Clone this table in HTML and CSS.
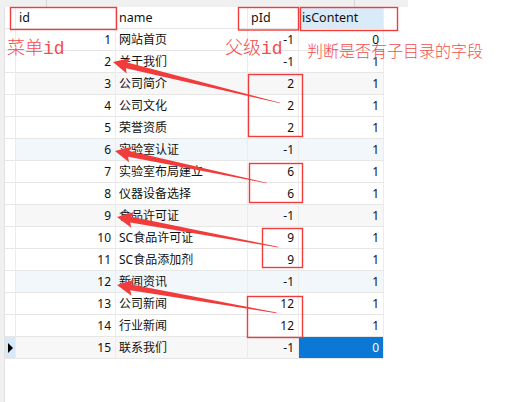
FILE: index.html
```html
<!DOCTYPE html>
<html lang="zh">
<head>
<meta charset="utf-8">
<link rel="stylesheet" href="styles.css">
</head>
<body>
<div class="page">
  <div class="topbar"><span class="tb-cell w47"></span><span class="tb-cell w308"></span><span class="tb-cell w53"></span></div>
  <div class="main">
    <div class="gutter"></div>
    <div class="grid">
      <div class="row head">
        <div class="c rh"></div>
        <div class="c">id</div>
        <div class="c">name</div>
        <div class="c">pId</div>
        <div class="c sel">isContent</div>
      </div>
      <div class="row"><div class="c rh"></div><div class="c n">1</div><div class="c">网站首页</div><div class="c n">-1</div><div class="c n">0</div></div>
      <div class="row"><div class="c rh"></div><div class="c n">2</div><div class="c">关于我们</div><div class="c n">-1</div><div class="c n">1</div></div>
      <div class="row grey"><div class="c rh"></div><div class="c n">3</div><div class="c">公司简介</div><div class="c n">2</div><div class="c n">1</div></div>
      <div class="row"><div class="c rh"></div><div class="c n">4</div><div class="c">公司文化</div><div class="c n">2</div><div class="c n">1</div></div>
      <div class="row"><div class="c rh"></div><div class="c n">5</div><div class="c">荣誉资质</div><div class="c n">2</div><div class="c n">1</div></div>
      <div class="row blue"><div class="c rh"></div><div class="c n">6</div><div class="c">实验室认证</div><div class="c n">-1</div><div class="c n">1</div></div>
      <div class="row"><div class="c rh"></div><div class="c n">7</div><div class="c">实验室布局建立</div><div class="c n">6</div><div class="c n">1</div></div>
      <div class="row"><div class="c rh"></div><div class="c n">8</div><div class="c">仪器设备选择</div><div class="c n">6</div><div class="c n">1</div></div>
      <div class="row grey"><div class="c rh"></div><div class="c n">9</div><div class="c">食品许可证</div><div class="c n">-1</div><div class="c n">1</div></div>
      <div class="row"><div class="c rh"></div><div class="c n">10</div><div class="c">SC食品许可证</div><div class="c n">9</div><div class="c n">1</div></div>
      <div class="row"><div class="c rh"></div><div class="c n">11</div><div class="c">SC食品添加剂</div><div class="c n">9</div><div class="c n">1</div></div>
      <div class="row blue"><div class="c rh"></div><div class="c n">12</div><div class="c">新闻资讯</div><div class="c n">-1</div><div class="c n">1</div></div>
      <div class="row"><div class="c rh"></div><div class="c n">13</div><div class="c">公司新闻</div><div class="c n">12</div><div class="c n">1</div></div>
      <div class="row"><div class="c rh"></div><div class="c n">14</div><div class="c">行业新闻</div><div class="c n">12</div><div class="c n">1</div></div>
      <div class="row grey"><div class="c rh cur"><span class="tri"></span></div><div class="c n">15</div><div class="c">联系我们</div><div class="c n">-1</div><div class="c n focus">0</div></div>
    </div>
  </div>

  <div class="overlay">
    <svg class="marks" width="505" height="402" viewBox="0 0 505 402">
      <g fill="none" stroke="#f23c3c" stroke-width="1.4">
        <rect x="10.5" y="7.5" width="106" height="22"/>
        <rect x="238.5" y="7.5" width="60" height="22.5"/>
        <rect x="300.5" y="7.5" width="97" height="23"/>
        <rect x="248.5" y="74.5" width="54" height="62"/>
        <rect x="249.5" y="163.5" width="53" height="39"/>
        <rect x="262.5" y="228.5" width="40" height="39"/>
        <rect x="247.5" y="296.5" width="55" height="41"/>
      </g>
      <g fill="#f23c3c">
        <polygon transform="translate(113 62) rotate(13.8)" points="0,0 16,-8 14,-3 172,-0.3 172,0.3 14,3 16,8"/>
        <polygon transform="translate(115 151) rotate(11.9)" points="0,0 16,-8 14,-3 155,-0.3 155,0.3 14,3 16,8"/>
        <polygon transform="translate(117 217) rotate(10.6)" points="0,0 16,-8 14,-3 164,-0.3 164,0.3 14,3 16,8"/>
        <polygon transform="translate(117 285) rotate(9.9)" points="0,0 16,-8 14,-3 162,-0.3 162,0.3 14,3 16,8"/>
      </g>
    </svg>
    <div class="note note-id">菜单<span class="mono">id</span></div>
    <div class="note note-pid">父级<span class="mono">id</span></div>
    <div class="note note-is">判断是否有子目录的字段</div>
  </div>
</div>
</body>
</html>
```
FILE: styles.css
```css
* { box-sizing: border-box; }
html, body { margin: 0; padding: 0; background: #fff; }
body {
  font-family: "Noto Sans", "Noto Sans CJK SC", sans-serif;
  font-size: 12px;
  color: #111;
}
.page {
  position: relative;
  width: 505px;
  height: 402px;
  overflow: hidden;
  display: flex;
  flex-direction: column;
}
.topbar {
  height: 7px;
  display: flex;
  flex: none;
}
.tb-cell {
  height: 7px;
  background: #f0f0f0;
  border-right: 1px solid #d6d6d6;
}
.w47 { width: 47px; }
.w308 { width: 308px; }
.w53 { width: 53px; border-right: none; }
.main {
  flex: 1;
  display: flex;
}
.gutter {
  width: 5px;
  background: #f0f0f0;
  border-right: 1px solid #e2e2e2;
}
.grid {
  display: flex;
  flex-direction: column;
}
.row {
  display: grid;
  grid-template-columns: 11px 100px 132px 51px 85px;
  height: 22px;
}
.c {
  border-right: 1px solid #ececec;
  border-bottom: 1px solid #e6e6e6;
  padding: 0 3px;
  line-height: 21px;
  white-space: nowrap;
  overflow: hidden;
}
.head .c { line-height: 21px; padding-left: 3px; font-size: 12.5px; }
.head { height: 22px; }
.sel { background: #d9eaf8; }
.n { text-align: right; padding-right: 4px; }
.rh { padding: 0; background: #fff; }
.grey .c { background: #f7f7f7; }
.blue .c { background: #f2f7fc; }
.grey .rh, .blue .rh { background: #fff; }
.rh.cur { background: #d9e8f6; display: flex; align-items: center; justify-content: center; }
.tri {
  width: 0; height: 0;
  border-top: 5px solid transparent;
  border-bottom: 5px solid transparent;
  border-left: 5px solid #000;
}
.c.focus { background: #0a78d4; color: #fff; }
.overlay {
  position: absolute;
  left: 0; top: 0;
  width: 505px; height: 402px;
  pointer-events: none;
}
.marks { position: absolute; left: 0; top: 0; }
.note {
  position: absolute;
  color: #f44c4c;
  font-family: "Noto Sans CJK SC", sans-serif;
  font-weight: 300;
  white-space: nowrap;
  line-height: 1;
}
.mono { font-family: "Liberation Mono", "DejaVu Sans Mono", monospace; }
.note-id { left: 7px; top: 37px; font-size: 18px; }
.note-pid { left: 225px; top: 37px; font-size: 18px; }
.note-is { left: 307px; top: 42px; font-size: 16px; }
```
